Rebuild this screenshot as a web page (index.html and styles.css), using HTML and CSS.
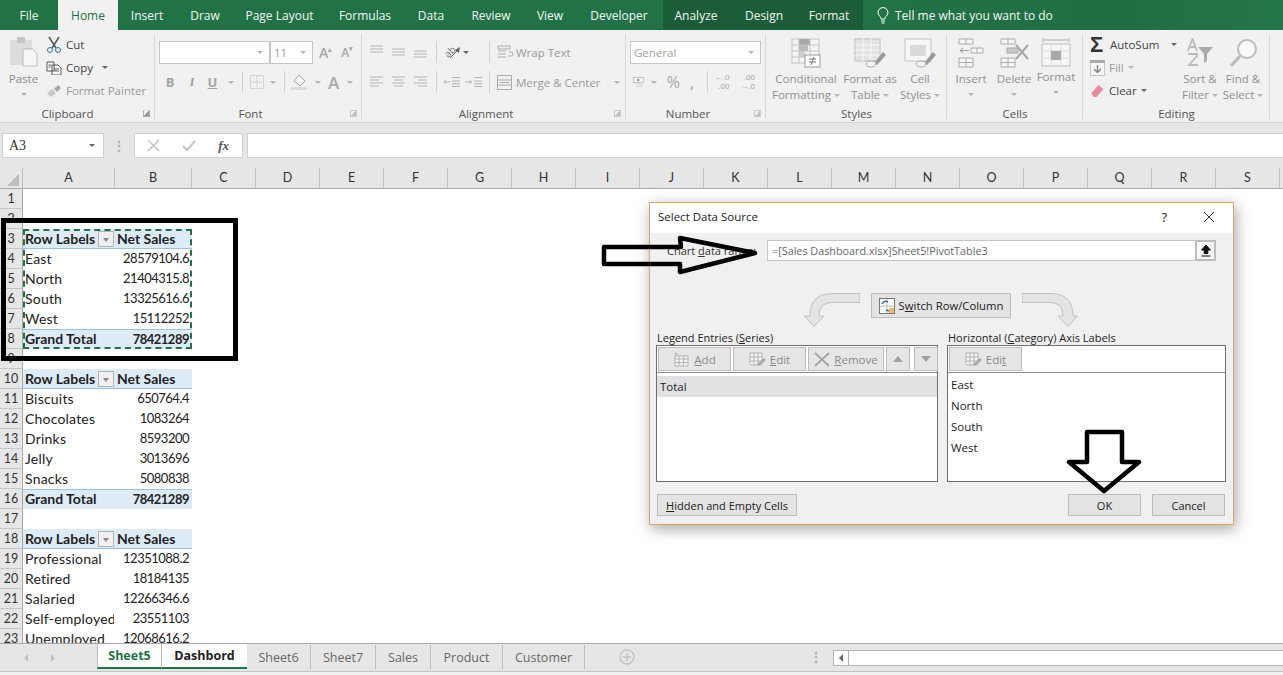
FILE: index.html
```html
<!DOCTYPE html>
<html lang="en">
<head>
<meta charset="utf-8">
<title>Select Data Source - Sales Dashboard</title>
<link rel="stylesheet" href="styles.css">
</head>
<body>
<div class="app">
  <nav class="tabs">
    <span class="tab">File</span><span class="tab active">Home</span><span class="tab">Insert</span><span class="tab">Draw</span><span class="tab">Page Layout</span><span class="tab">Formulas</span><span class="tab">Data</span><span class="tab">Review</span><span class="tab">View</span><span class="tab">Developer</span>
    <span class="tab ctx">Analyze</span><span class="tab ctx">Design</span><span class="tab ctx">Format</span><span class="tab ctx"></span>
    <span class="tell"><svg width="14" height="18" viewBox="0 0 14 18"><path d="M7 1.500a5 5 0 0 0-3 9c.7.6 1 1.300 1 2.500h4c0-1.200.3-1.900 1-2.500a5 5 0 0 0-3-9zM5 15h4M5.500 17h3" fill="none" stroke="#fff" stroke-width="1"/></svg>Tell me what you want to do</span>
  </nav>

  <section class="ribbon">
    <div class="group g-clip">
      <div class="body clip-body">
        <div class="big paste">
          <svg width="30" height="30" viewBox="0 0 30 30"><rect x="1" y="3" width="22" height="25" fill="#dcdcdc"/><rect x="8" y="0" width="8" height="6" fill="#c4c4c4"/><path d="M14 12h10l4 5v12H14z" fill="#f6f6f6" stroke="#bdbdbd"/></svg>
          <span class="t-mid">Paste</span><i class="caret"></i>
        </div>
        <div class="stack">
          <div class="cmd"><svg width="16" height="18" viewBox="0 0 16 18"><path d="M3 1l7 11M13 1L6 12" stroke="#555" stroke-width="1.500" fill="none"/><circle cx="4" cy="14" r="2.500" fill="none" stroke="#2f6fb0"/><circle cx="12" cy="14" r="2.500" fill="none" stroke="#2f6fb0"/></svg><span>Cut</span></div>
          <div class="cmd"><svg width="16" height="14" viewBox="0 0 16 14"><path d="M1 1h7v9H1zM6 4h6l3 3v7H6z" fill="#fff" stroke="#555"/><path d="M8 8h5M8 10h5M2.500 4h3M2.500 6h2" stroke="#555"/></svg><span>Copy</span><i class="caret dark"></i></div>
          <div class="cmd off"><svg width="16" height="14" viewBox="0 0 16 14"><path d="M1 9l5-4 4 4-5 4z" fill="#c8c8c8"/><path d="M8 5l4-4 3 3-4 4z" fill="#a8a8a8"/></svg><span>Format Painter</span></div>
        </div>
      </div>
      <div class="label">Clipboard<i class="launch"></i></div>
    </div>

    <div class="group g-font">
      <div class="body two-rows">
        <div class="line">
          <div class="select s-name"><i class="caret"></i></div>
          <div class="select s-size"><span>11</span><i class="caret"></i></div>
          <span class="glyph grow">A<sup>▴</sup></span><span class="glyph shrink">A<sup>▾</sup></span>
        </div>
        <div class="line tools">
          <b class="fmt">B</b><em class="fmt">I</em><u class="fmt">U</u><i class="caret"></i><i class="vsep"></i>
          <svg width="14" height="14" viewBox="0 0 14 14"><rect x=".5" y=".5" width="13" height="13" fill="none" stroke="#bbb" stroke-dasharray="1 1"/><path d="M7 1v12M1 7h12" stroke="#bbb" stroke-dasharray="1 1"/></svg><i class="caret"></i><i class="vsep v2"></i>
          <svg width="18" height="16" viewBox="0 0 18 16"><path d="M8 1l6 6-5 5-6-5z" fill="#f5f5f5" stroke="#aaa"/><rect x="0" y="13" width="16" height="3" fill="#dcdcdc"/></svg><i class="caret"></i>
          <span class="glyph big-a">A</span><i class="caret"></i>
        </div>
      </div>
      <div class="label">Font<i class="launch"></i></div>
    </div>

    <div class="group g-align">
      <div class="body two-rows">
        <div class="line">
          <svg class="ic" width="59" height="14" viewBox="0 0 59 14"><path d="M1 1h13M1 4h13M1 7h13M23 4h13M23 7h13M23 10h13M45 6h13M45 9h13M45 12h13" stroke="#b5b5b5"/></svg><i class="vsep"></i>
          <svg class="orient" width="20" height="18" viewBox="0 0 20 18"><text x="1" y="13" transform="rotate(-45 6 9)" font-family="Open Sans, sans-serif" font-size="10" fill="#777">ab</text><path d="M7 15L16 6" stroke="#666" fill="none"/><path d="M17 4l-1 6-4-3z" fill="#666"/></svg><i class="caret dark"></i><i class="vsep sp"></i>
          <div class="cmd off wrap"><svg width="17" height="15" viewBox="0 0 17 15"><path d="M1 1h12v3H1zM1 6h8M1 9h8M1 12h8M11 11h3q2 0 2-2t-2-2h-2" fill="none" stroke="#aaa"/></svg><span>Wrap Text</span></div>
        </div>
        <div class="line">
          <svg class="ic" width="59" height="14" viewBox="0 0 59 14"><path d="M1 2h13M1 5h9M1 8h13M1 11h9M23 2h13M25 5h9M23 8h13M25 11h9M45 2h13M49 5h9M45 8h13M49 11h9" stroke="#b5b5b5"/></svg><i class="vsep"></i>
          <svg class="indent" width="41" height="14" viewBox="0 0 46 14"><path d="M1 7h7M3 5l-2 2 2 2M10 2h9M10 6h9M10 9h9M10 12h9M25 7h7M30 5l2 2-2 2M35 2h9M35 6h9M35 9h9M35 12h9" fill="none" stroke="#aaa"/></svg><i class="vsep sp"></i>
          <div class="cmd off wrap merge"><svg width="15" height="15" viewBox="0 0 15 15"><path d="M.5.500h14v14H.5zM.5 5h14M.5 10h14M3 7.500h9" fill="none" stroke="#aaa"/></svg><span>Merge &amp; Center</span><i class="caret"></i></div>
        </div>
      </div>
      <div class="label">Alignment<i class="launch"></i></div>
    </div>

    <div class="group g-num">
      <div class="body two-rows">
        <div class="line"><div class="select s-gen"><span>General</span><i class="caret"></i></div></div>
        <div class="line tools">
          <svg width="18" height="16" viewBox="0 0 18 16"><rect x="1" y="1" width="15" height="8" fill="#f4f4f4" stroke="#aaa"/><circle cx="8" cy="5" r="2" fill="#999"/><path d="M5 11h11M5 13h11M5 15h9" stroke="#ccc"/></svg><i class="caret"></i>
          <span class="glyph pct">%</span><span class="glyph comma">,</span><i class="vsep"></i>
          <span class="dec">←.0<br>.00</span><span class="dec">.00<br>→.0</span>
        </div>
      </div>
      <div class="label">Number<i class="launch"></i></div>
    </div>

    <div class="group g-styles">
      <div class="body bigs">
        <div class="big b-cond">
          <svg width="30" height="30" viewBox="0 0 30 30"><rect x="1" y="1" width="27" height="24" fill="#f4f4f4" stroke="#c4c4c4"/><rect x="8" y="1" width="11" height="6" fill="#a8a8a8"/><rect x="8" y="7" width="9" height="6" fill="#bcbcbc"/><rect x="8" y="13" width="6" height="6" fill="#d0d0d0"/><path d="M1 7h27M1 13h27M1 19h27M8 1v24M19 1v24" stroke="#c4c4c4" fill="none"/><rect x="14" y="17" width="15" height="12" fill="#fff" stroke="#999"/><path d="M18 21h7M18 24h7M23 19l-3 8" stroke="#777"/></svg>
          <span>Conditional<br>Formatting<i class="caret in"></i></span>
        </div>
        <div class="big b-table">
          <svg width="32" height="30" viewBox="0 0 32 30"><rect x="1" y="1" width="25" height="22" fill="#e4e4e4" stroke="#bbb"/><path d="M1 7h25M1 12h25M1 17h25M9 1v22M17 1v22" stroke="#f7f7f7"/><path d="M20 25l9-11 3 3-9 10z" fill="#999"/><ellipse cx="17" cy="26" rx="5" ry="3" fill="#f4f4f4" stroke="#aaa"/></svg>
          <span>Format as<br>Table<i class="caret in"></i></span>
        </div>
        <div class="big b-cell">
          <svg width="32" height="30" viewBox="0 0 32 30"><rect x="1" y="1" width="26" height="22" fill="#f6f6f6" stroke="#c4c4c4"/><rect x="6" y="7" width="16" height="11" fill="#dadada"/><path d="M20 25l9-11 3 3-9 10z" fill="#999"/><ellipse cx="17" cy="26" rx="5" ry="3" fill="#f4f4f4" stroke="#aaa"/></svg>
          <span>Cell<br>Styles<i class="caret in"></i></span>
        </div>
      </div>
      <div class="label">Styles</div>
    </div>

    <div class="group g-cells">
      <div class="body bigs">
        <div class="big b-ins">
          <svg width="28" height="30" viewBox="0 0 28 30"><path d="M2 1h14v5H2zM9 1v5M2 20h14v9H2zM2 24.500h14M9 20v9M14 10h12v5H14zM20 10v5" fill="#f6f6f6" stroke="#aaa"/><path d="M12 12.500H3M6 10l-3 2.500L6 15" fill="none" stroke="#999"/></svg>
          <span>Insert</span><i class="caret"></i>
        </div>
        <div class="big b-del">
          <svg width="30" height="30" viewBox="0 0 30 30"><path d="M2 1h14v5H2zM9 1v5M2 20h14v9H2zM2 24.500h14M9 20v9" fill="#f6f6f6" stroke="#aaa"/><rect x="8" y="10" width="11" height="5" fill="#c8c8c8" stroke="#aaa"/><path d="M17 7l12 14M29 7L17 21" stroke="#a6a6a6" stroke-width="2"/></svg>
          <span>Delete</span><i class="caret"></i>
        </div>
        <div class="big b-fmt">
          <svg width="30" height="32" viewBox="0 0 30 32"><path d="M2 2v4M28 2v4M3 4h24" stroke="#aaa"/><rect x="1" y="8" width="28" height="22" fill="#f6f6f6" stroke="#bbb"/><path d="M1 15h28M1 22h28M10 8v22M20 8v22" stroke="#ddd"/><rect x="10" y="15" width="10" height="9" fill="#a8a8a8"/></svg>
          <span>Format</span><i class="caret"></i>
        </div>
      </div>
      <div class="label">Cells</div>
    </div>

    <div class="group g-edit">
      <div class="body edit-body">
        <div class="stack">
          <div class="cmd sum"><span class="sigma">Σ</span><span>AutoSum</span><i class="caret dark"></i></div>
          <div class="cmd off"><svg width="15" height="16" viewBox="0 0 15 16"><rect x=".5" y=".5" width="14" height="15" fill="#f6f6f6" stroke="#c4c4c4"/><rect x="0" y="0" width="15" height="3" fill="#aaa"/><path d="M7.500 5v7M4 9l3.500 3.500L11 9" fill="none" stroke="#888" stroke-width="1.500"/></svg><span>Fill</span><i class="caret"></i></div>
          <div class="cmd"><svg width="15" height="14" viewBox="0 0 14 14"><path d="M1 9l7-8 5 4-7 8H3z" fill="#ea8a9c"/></svg><span>Clear</span><i class="caret dark"></i></div>
        </div>
        <div class="big b-sort">
          <svg width="28" height="30" viewBox="0 0 28 30"><path d="M2 13L6.500 1 11 13M4 9h5M2 16h9v2l-8 9h9" fill="none" stroke="#bbb" stroke-width="1.800"/><path d="M12 9h15l-6 7v7l-3 2v-9z" fill="#aaa"/></svg>
          <span>Sort &amp;<br>Filter<i class="caret in"></i></span>
        </div>
        <div class="big b-find">
          <svg width="30" height="30" viewBox="0 0 30 30"><circle cx="19" cy="11" r="9" fill="#f8f8f8" stroke="#bbb" stroke-width="2"/><path d="M12 18L3 28" stroke="#bbb" stroke-width="3"/></svg>
          <span>Find &amp;<br>Select<i class="caret in"></i></span>
        </div>
      </div>
      <div class="label">Editing</div>
    </div>
  </section>

  <section class="formula">
    <div class="namebox"><span>A3</span><i class="caret dark"></i></div>
    <span class="dots">⋮</span>
    <div class="fx">
      <svg width="13" height="13" viewBox="0 0 13 13"><path d="M1 1l11 11M12 1L1 12" stroke="#c4c4c4" stroke-width="1.500"/></svg>
      <svg width="14" height="13" viewBox="0 0 14 13"><path d="M1 7l4 4 8-9" fill="none" stroke="#c4c4c4" stroke-width="2"/></svg>
      <em>fx</em>
    </div>
    <div class="input"></div>
  </section>

  <section class="sheet">
    <div class="cols">
      <span class="corner"><svg width="14" height="14" viewBox="0 0 14 14"><path d="M14 2v12H2z" fill="#bdbdbd"/></svg></span>
      <span class="col ca">A</span><span class="col cb">B</span><span class="col">C</span><span class="col">D</span><span class="col">E</span><span class="col">F</span><span class="col">G</span><span class="col">H</span><span class="col">I</span><span class="col">J</span><span class="col">K</span><span class="col">L</span><span class="col">M</span><span class="col">N</span><span class="col">O</span><span class="col">P</span><span class="col">Q</span><span class="col">R</span><span class="col">S</span>
    </div>
    <div class="row"><span class="rh">1</span></div>
    <div class="row"><span class="rh">2</span></div>
    <div class="row head"><span class="rh">3</span><span class="a">Row Labels<i class="filter"></i></span><span class="b left">Net Sales</span></div>
    <div class="row"><span class="rh">4</span><span class="a">East</span><span class="b">28579104.6</span></div>
    <div class="row"><span class="rh">5</span><span class="a">North</span><span class="b">21404315.8</span></div>
    <div class="row"><span class="rh">6</span><span class="a">South</span><span class="b">13325616.6</span></div>
    <div class="row"><span class="rh">7</span><span class="a">West</span><span class="b">15112252</span></div>
    <div class="row total"><span class="rh">8</span><span class="a">Grand Total</span><span class="b">78421289</span></div>
    <div class="row"><span class="rh">9</span></div>
    <div class="row head"><span class="rh">10</span><span class="a">Row Labels<i class="filter"></i></span><span class="b left">Net Sales</span></div>
    <div class="row"><span class="rh">11</span><span class="a">Biscuits</span><span class="b">650764.4</span></div>
    <div class="row"><span class="rh">12</span><span class="a">Chocolates</span><span class="b">1083264</span></div>
    <div class="row"><span class="rh">13</span><span class="a">Drinks</span><span class="b">8593200</span></div>
    <div class="row"><span class="rh">14</span><span class="a">Jelly</span><span class="b">3013696</span></div>
    <div class="row"><span class="rh">15</span><span class="a">Snacks</span><span class="b">5080838</span></div>
    <div class="row total"><span class="rh">16</span><span class="a">Grand Total</span><span class="b">78421289</span></div>
    <div class="row"><span class="rh">17</span></div>
    <div class="row head"><span class="rh">18</span><span class="a">Row Labels<i class="filter"></i></span><span class="b left">Net Sales</span></div>
    <div class="row"><span class="rh">19</span><span class="a">Professional</span><span class="b">12351088.2</span></div>
    <div class="row"><span class="rh">20</span><span class="a">Retired</span><span class="b">18184135</span></div>
    <div class="row"><span class="rh">21</span><span class="a">Salaried</span><span class="b">12266346.6</span></div>
    <div class="row"><span class="rh">22</span><span class="a">Self-employed</span><span class="b">23551103</span></div>
    <div class="row"><span class="rh">23</span><span class="a">Unemployed</span><span class="b">12068616.2</span></div>
  </section>

  <footer class="sheetbar">
    <div class="nav"><i class="tri l"></i><i class="tri r"></i></div>
    <span class="st cur">Sheet5</span><span class="st sel">Dashbord</span><span class="st w1">Sheet6</span><span class="st w1b">Sheet7</span><span class="st w2">Sales</span><span class="st w3">Product</span><span class="st w4">Customer</span>
    <span class="plus"><svg width="16" height="16" viewBox="0 0 16 16"><circle cx="8" cy="8" r="7" fill="none" stroke="#c4c4c4" stroke-width="1.500"/><path d="M8 4v8M4 8h8" stroke="#c4c4c4" stroke-width="1.500"/></svg></span>
    <span class="dots bar-dots">⋮</span>
    <div class="hscroll"><span class="sbtn"><i class="tri l dark"></i></span></div>
  </footer>
  <div class="status"></div>
</div>

<div class="marquee"></div>

<div class="dialog">
  <header class="d-title"><span>Select Data Source</span><span class="help">?</span><svg width="12" height="12" viewBox="0 0 12 12"><path d="M1 1l10 10M11 1L1 11" stroke="#333" stroke-width="1"/></svg></header>
  <div class="d-body">
    <div class="range">
      <label>Chart <u>d</u>ata range:</label>
      <div class="r-input"><span>=[Sales Dashboard.xlsx]Sheet5!PivotTable3</span><span class="r-btn"><svg width="12" height="13" viewBox="0 0 12 13"><path d="M6 1l4.500 5H7.800v3.500H4.200V6H1.500zM1.500 12h9" fill="#111" stroke="#111"/></svg></span></div>
    </div>
    <div class="switch">
      <svg width="56" height="34" viewBox="0 0 56 34"><path d="M56 .5H28Q6 .5 6 23H.5L10 33.500 20 23h-5q0-13.500 13-13.500h28z" fill="#e4e4e4" stroke="#c0c0c0"/></svg>
      <div class="btn b-switch"><svg width="16" height="16" viewBox="0 0 16 16"><rect x=".5" y=".5" width="15" height="15" fill="#fff" stroke="#777"/><path d="M8 1v14M1 8h14" stroke="#bbb"/><path d="M3 6q2-4 6-2M13 10q-2 4-6 2" fill="none" stroke="#2f6fb0" stroke-width="1.500"/><path d="M10 10h5v5h-5z" fill="#f2b66d"/></svg><span>S<u>w</u>itch Row/Column</span></div>
      <svg width="56" height="34" viewBox="0 0 56 34"><path d="M0 .5h28Q51 .5 51 23h4.500L46 33.500 36 23h5Q41 9.500 28 9.500H0z" fill="#e4e4e4" stroke="#c0c0c0"/></svg>
    </div>
    <div class="lists">
      <div class="list l-left">
        <div class="l-cap">Legend Entries (<u>S</u>eries)</div>
        <div class="box">
          <div class="tb">
            <div class="btn t-add"><svg width="17" height="15" viewBox="0 0 17 15"><path d="M2 4h13v10H2zM2 7h13M2 10.500h13M6 4v10M10.500 4v10" fill="#f3f3f3" stroke="#b5b5b5"/><path d="M3 0v4M1 2h4" stroke="#b5b5b5"/></svg><span><u>A</u>dd</span></div>
            <div class="btn t-edit"><svg width="17" height="15" viewBox="0 0 17 15"><path d="M1 1h12v12H1zM1 5h12M1 9h12M5 1v12M9 1v12" fill="#f3f3f3" stroke="#b5b5b5"/><path d="M8 12l7-6 2 2-7 6z" fill="#aaa"/></svg><span><u>E</u>dit</span></div>
            <div class="btn t-rem"><svg width="16" height="15" viewBox="0 0 16 15"><path d="M1 1l14 13M15 1L1 14" stroke="#a6a6a6" stroke-width="1.800"/></svg><span><u>R</u>emove</span></div>
            <div class="btn t-arrow"><i class="up"></i></div>
            <div class="btn t-arrow t-down"><i class="down"></i></div>
          </div>
          <div class="item chosen">Total</div>
        </div>
      </div>
      <div class="list l-right">
        <div class="l-cap">Horizontal (<u>C</u>ategory) Axis Labels</div>
        <div class="box">
          <div class="tb">
            <div class="btn t-axis"><svg width="17" height="15" viewBox="0 0 17 15"><path d="M1 1h12v12H1zM1 5h12M1 9h12M5 1v12M9 1v12" fill="#f3f3f3" stroke="#b5b5b5"/><path d="M8 12l7-6 2 2-7 6z" fill="#aaa"/></svg><span>Edi<u>t</u></span></div>
          </div>
          <div class="items">
            <div class="item">East</div><div class="item">North</div><div class="item">South</div><div class="item">West</div>
          </div>
        </div>
      </div>
    </div>
    <div class="d-foot">
      <div class="btn f-hidden"><span><u>H</u>idden and Empty Cells</span></div>
      <div class="btn f-ok">OK</div>
      <div class="btn f-cancel">Cancel</div>
    </div>
  </div>
</div>

<svg class="ink" width="1283" height="675" viewBox="0 0 1283 675">
  <rect x="3.500" y="220.500" width="232" height="138" fill="none" stroke="#000" stroke-width="5"/>
  <path d="M604 247H681L680 238 755 253 680 272V264H604Z" fill="none" stroke="#000" stroke-width="4.500" stroke-linejoin="round"/>
  <path d="M1087 432H1122V462H1139L1104 491 1069 462H1087Z" fill="none" stroke="#000" stroke-width="4.500" stroke-linejoin="round"/>
</svg>
</body>
</html>
```
FILE: styles.css
```css
* { box-sizing: border-box; }
html, body { margin: 0; height: 675px; overflow: hidden; background: #fff; }
body { font-family: "Open Sans", "Noto Sans", sans-serif; font-size: 11.5px; color: #444; }
i { display: inline-block; font-style: normal; }

.app { display: flex; flex-direction: column; height: 675px; width: 1283px; }

/* Title tabs */
.tabs { height: 30px; flex: none; display: grid; grid-template-columns: 58px 60px 58px 58px 91px 80px 52px 68px 50px 88px 66px 70px 60px 4px 1fr; background: #217346; color: #fff; font-size: 12px; }
.tab { display: flex; align-items: center; justify-content: center; color: #f2f7f4; }
.tab.active { background: #f1f1f1; color: #217346; }
.tab.ctx { background: #1c5d39; }
.tell { display: flex; align-items: center; gap: 5px; padding-left: 13px; color: #f2f7f4; background: linear-gradient(90deg, #217346, #1f6f43 60%, #23754a); }

/* Ribbon */
.ribbon { height: 93px; flex: none; display: flex; background: #f1f1f1; border-bottom: 1px solid #d6d6d6; }
.group { flex: none; display: flex; flex-direction: column; height: 92px; padding-top: 4px; position: relative; }
.group::after { content: ""; position: absolute; right: 0; top: 4px; bottom: 3px; width: 1px; background: #d8d8d8; }
.body { flex: 1; min-height: 0; }
.label { height: 18px; flex: none; text-align: center; color: #555; font-size: 11.5px; line-height: 19px; position: relative; }
.g-clip .label { padding-right: 20px; }
.g-font .label, .g-align .label, .g-num .label { padding-right: 16px; }
.launch { position: absolute; right: 5px; top: 6px; width: 7px; height: 7px; border: 1px solid #aaa; border-top-color: #ddd; background: linear-gradient(135deg, #f1f1f1 50%, #999 50%); }
.g-font .launch, .g-align .launch, .g-num .launch { border-color: #ccc; background: linear-gradient(135deg, #f1f1f1 50%, #c4c4c4 50%); }
.g-clip { width: 155px; }
.g-font { width: 207px; }
.g-align { width: 264px; }
.g-num { width: 140px; }
.g-styles { width: 181px; }
.g-cells { width: 136px; }
.g-edit { width: 187px; }

.caret { width: 0; height: 0; border: 3px solid transparent; border-top: 3px solid #b4b4b4; border-bottom: 0; }
.caret.dark { border-top-color: #666; }
.caret.in { margin-left: 3px; vertical-align: 2px; }

.big { display: flex; flex-direction: column; align-items: center; line-height: 16px; color: #909090; text-align: center; white-space: nowrap; }
.big svg { height: 30px; margin-bottom: 3px; flex: none; }
.big .caret { margin-top: 6px; }

.clip-body { display: flex; padding-left: 7px; gap: 6px; }
.paste { width: 33px; padding-top: 3px; }
.paste svg { margin-bottom: 4px; }
.t-mid { color: #8a8a8a; }
.stack { display: flex; flex-direction: column; margin-top: -1px; }
.cmd { height: 23px; display: flex; align-items: center; gap: 4px; color: #444; white-space: nowrap; }
.cmd.off { color: #9a9a9a; }
.cmd .caret { margin-left: 5px; }

.two-rows { display: flex; flex-direction: column; padding-left: 4px; }
.line { height: 30px; display: flex; align-items: center; margin-top: 3px; }
.line + .line { margin-top: 0; }
.select { height: 23px; background: #fff; border: 1px solid #c6c6c6; display: flex; align-items: center; justify-content: space-between; padding: 0 6px 0 3px; color: #a0a0a0; flex: none; }
.s-name { width: 111px; justify-content: flex-end; }
.s-size { width: 43px; }
.s-gen { width: 131px; }
.glyph { color: #a8a8a8; font-size: 14px; font-weight: 600; }
.glyph sup { font-size: 7px; vertical-align: 6px; line-height: 0; }
.grow { margin-left: 6px; font-size: 14px; }
.shrink { margin-left: 9px; font-size: 12px; }

.tools { gap: 0; }
.fmt { width: 22px; text-align: center; color: #a4a4a4; font-size: 13px; font-family: "Liberation Serif", serif; font-weight: 700; }
b.fmt, u.fmt { font-family: "Open Sans", sans-serif; }
u.fmt { width: 19px; }
.vsep { width: 1px; height: 22px; background: #d2d2d2; margin: 0 7px 0 8px; }
.vsep.v2 { margin-right: 6px; }
.tools .caret { margin-left: 6px; }
.big-a { font-size: 17px; margin-left: 7px; }
.tools .big-a + .caret { margin-left: 8px; }

.g-align .two-rows { padding-left: 7px; }
.g-align .vsep { margin: 0 6px 0 8px; }
.g-align .vsep.sp { margin: 0 7px 0 20px; }
.g-align .caret { margin-left: 0; }
.g-align .indent + .vsep.sp { margin-left: 5px; }
.wrap { gap: 2px; color: #a4a4a4; }
.merge { gap: 4px; }
.g-align .wrap .caret { margin-left: 9px; }

.g-num .two-rows { padding-left: 4px; }
.g-num .tools { padding-left: 3px; }
.pct { font-size: 16px; margin-left: 10px; font-weight: 400; }
.comma { font-size: 15px; margin-left: 10px; }
.g-num .vsep { margin: 0 7px 0 13px; }
.dec { font-family: "Liberation Sans", sans-serif; font-size: 8px; line-height: 9.5px; color: #a4a4a4; margin-right: 11px; text-align: right; white-space: nowrap; }

.bigs { display: flex; padding-top: 4px; }
.b-cond { width: 64px; margin-left: 8px; }
.b-table { width: 54px; margin-left: 5px; }
.b-cell { width: 44px; margin-left: 1px; }
.b-ins { width: 36px; margin-left: 6px; }
.b-del { width: 44px; margin-left: 3px; }
.b-fmt { width: 42px; margin-left: -1px; }
.big.b-fmt svg { height: 32px; margin-bottom: 1px; margin-top: -2px; }
.edit-body { display: flex; padding-left: 7px; }
.edit-body .stack { width: 88px; }
.sum { gap: 4px; }
.edit-body .cmd .caret { margin-left: 0; }
.edit-body .sum .caret { margin-left: 8px; }
.sigma { font-size: 22px; font-weight: 700; color: #333; line-height: 20px; width: 16px; font-family: "Liberation Sans", sans-serif; }
.edit-body .big { padding-top: 4px; }
.b-sort { width: 44px; }
.b-find { width: 42px; }

/* Formula bar */
.formula { height: 45px; flex: none; background: #e6e6e6; display: flex; align-items: flex-start; padding: 10px 0 0 2px; }
.namebox { width: 102px; height: 25px; background: #fff; border: 1px solid #d0d0d0; display: flex; align-items: center; justify-content: space-between; padding: 0 8px 0 6px; font-size: 14px; color: #333; font-family: "Liberation Serif", serif; }
.dots { color: #b0b0b0; font-size: 14px; line-height: 25px; width: 30px; text-align: center; font-weight: 700; }
.fx { width: 109px; height: 25px; background: #fff; border: 1px solid #d0d0d0; display: flex; align-items: center; justify-content: space-between; padding: 0 13px 0 12px; }
.fx em { font-family: "Liberation Serif", serif; font-size: 13px; color: #555; font-weight: 700; }
.input { flex: 1; height: 25px; margin-left: 4px; background: #fff; border: 1px solid #d0d0d0; border-right: 0; }

/* Sheet */
.sheet { flex: 1; min-height: 0; overflow: hidden; background: #fff; }
.cols { display: flex; height: 21px; background: #e6e6e6; border-bottom: 1px solid #a8a8a8; color: #333; font-family: "Lato", sans-serif; font-size: 12.500px; }
.corner { width: 23px; height: 20px; flex: none; display: flex; align-items: flex-end; justify-content: flex-end; border-right: 1px solid #bdbdbd; padding: 0 3px 2px 0; }
.col { width: 64px; flex: none; text-align: center; line-height: 20px; border-right: 1px solid #c2c2c2; }
.ca { width: 92px; }
.cb { width: 77px; }
.row { display: flex; height: 20px; font-family: "Lato", sans-serif; font-size: 14px; color: #222; line-height: 19px; }
.rh { width: 23px; flex: none; background: #e6e6e6; border-right: 1px solid #a8a8a8; border-bottom: 1px solid #c6c6c6; text-align: center; color: #333; font-size: 12.500px; }
.a { width: 91px; flex: none; padding-left: 2px; white-space: nowrap; overflow: hidden; position: relative; letter-spacing: .2px; }
.b { width: 78px; flex: none; text-align: right; padding-right: 3px; white-space: nowrap; font-size: 13px; letter-spacing: -.5px; }
.b.left { text-align: left; padding-left: 3px; font-size: 14px; letter-spacing: 0; }
.head .a, .head .b, .total .a, .total .b { background: #ddebf7; font-weight: 700; letter-spacing: 0; }
.total .b { letter-spacing: -.5px; }
.head .a, .head .b { border-bottom: 1px solid #9bc2e6; }
.total .a, .total .b { border-top: 1px solid #9bc2e6; line-height: 18px; }
.filter { position: absolute; right: 0; top: 2px; width: 16px; height: 16px; background: #f0f0f0; border: 1px solid #b4b4b4; }
.filter::after { content: ""; position: absolute; left: 4px; top: 6px; border: 3px solid transparent; border-top: 4px solid #888; border-bottom: 0; }

/* Sheet tabs */
.sheetbar { height: 29px; flex: none; background: #e6e6e6; border-top: 1px solid #a8a8a8; border-bottom: 1px solid #c4c4c4; display: flex; align-items: flex-start; font-size: 12.500px; color: #666; }
.nav { width: 97px; height: 27px; display: flex; align-items: center; padding-left: 24px; gap: 23px; }
.tri { width: 0; height: 0; border: 4px solid transparent; }
.tri.l { border-right: 4px solid #c0c0c0; border-left: 0; }
.tri.r { border-left: 4px solid #c0c0c0; border-right: 0; }
.tri.dark { border-right-color: #666; }
.st { height: 24px; display: flex; align-items: center; justify-content: center; border-right: 1px solid #bdbdbd; margin-top: 1px; flex: none; }
.st.cur, .st.sel { background: #fff; font-weight: 700; border-bottom: 2px solid #217346; height: 25px; margin-top: 0; }
.st.cur { width: 65px; color: #217346; border-left: 1px solid #bdbdbd; }
.st.sel { width: 85px; color: #222; border-right: 0; }
.w1 { width: 64px; }
.w1b { width: 65px; }
.w2 { width: 55px; }
.w3 { width: 72px; }
.w4 { width: 82px; }
.plus { margin: 5px 0 0 34px; width: 16px; height: 16px; flex: none; }
.bar-dots { margin-left: 173px; width: 16px; line-height: 26px; flex: none; }
.hscroll { flex: 1; height: 16px; margin: 6px 0 0 9px; background: #fff; border: 1px solid #b4b4b4; border-right: 0; }
.sbtn { display: flex; align-items: center; justify-content: center; width: 15px; height: 14px; border-right: 1px solid #b4b4b4; background: #fff; }
.status { height: 3px; flex: none; background: #f1f1f1; }

/* Marquee */
.marquee { position: absolute; left: 23px; top: 229px; width: 169px; height: 120px; border: 2px dashed #217346; pointer-events: none; }

/* Dialog */
.dialog { position: absolute; left: 649px; top: 202px; width: 585px; height: 323px; background: #f0f0f0; border: 1px solid #d9a866; box-shadow: 2px 4px 14px rgba(0,0,0,.35); display: flex; flex-direction: column; color: #222; font-size: 11.500px; }
.d-title { height: 30px; flex: none; background: #fff; display: flex; align-items: center; padding: 0 18px 3px 8px; color: #222; }
.d-title span:first-child { flex: 1; }
.help { margin-right: 36px; font-size: 13px; }
.d-body { flex: 1; display: flex; flex-direction: column; padding: 7px 7px 8px 6px; min-height: 0; }
.range { display: flex; align-items: center; height: 21px; padding-left: 11px; padding-right: 10px; }
.range label { width: 100px; color: #333; white-space: nowrap; flex: none; font-size: 11px; }
.r-input { flex: 1; height: 21px; background: #fff; border: 1px solid #c6c6c6; border-right: 0; display: flex; align-items: center; justify-content: space-between; padding-left: 4px; color: #666; font-size: 10.800px; }
.r-btn { width: 21px; height: 21px; background: #f7f7f7; border: 2px solid #bcbcbc; display: flex; align-items: center; justify-content: center; }
.switch { display: flex; justify-content: center; gap: 11px; margin-top: 32px; height: 37px; }
.btn { background: #e3e3e3; border: 1px solid #bdbdbd; display: flex; align-items: center; justify-content: center; color: #222; flex: none; }
.b-switch { width: 140px; height: 25px; gap: 4px; font-size: 11.300px; }
.lists { display: flex; gap: 9px; margin-top: 2px; }
.list { display: flex; flex-direction: column; }
.l-left { width: 282px; }
.l-right { width: 279px; }
.l-cap { height: 14px; line-height: 14px; color: #222; white-space: nowrap; font-size: 11px; padding-left: 1px; }
.box { height: 137px; background: #fff; border: 1px solid #6f6f6f; }
.tb { height: 27px; display: flex; gap: 2px; padding: 1px 1px 0 1px; border-bottom: 1px solid #8a8a8a; }
.tb .btn { height: 24px; color: #8a8a8a; gap: 4px; background: #e6e6e6; }
.t-add { width: 73px; }
.t-edit { width: 73px; }
.t-rem { width: 76px; }
.t-arrow { width: 24px; }
.t-down { margin-left: 2px; }
.t-axis { width: 73px; }
.up { border: 5px solid transparent; border-bottom: 6px solid #a0a0a0; border-top: 0; }
.down { border: 5px solid transparent; border-top: 6px solid #a0a0a0; border-bottom: 0; }
.item { height: 21px; line-height: 21px; padding-left: 3px; color: #222; }
.item.chosen { background: #e1e1e4; margin-top: 3px; }
.items { padding-top: 1px; }
.d-foot { display: flex; margin-top: 12px; height: 22px; padding-left: 1px; font-size: 11px; }
.d-foot .btn { height: 22px; background: #e3e3e3; }
.f-hidden { width: 140px; }
.f-ok { width: 73px; margin-left: 271px; }
.f-cancel { width: 73px; margin-left: 11px; }

.ink { position: absolute; left: 0; top: 0; pointer-events: none; }
```
